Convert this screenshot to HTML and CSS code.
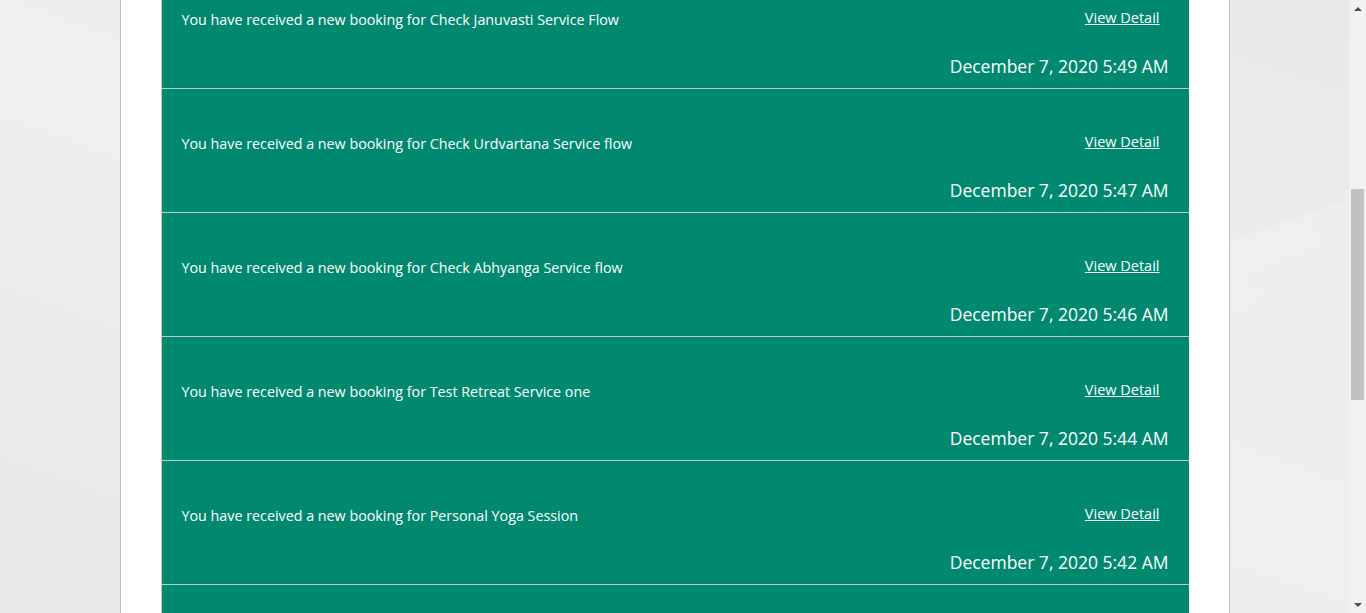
FILE: index.html
```html
<!DOCTYPE html>
<html lang="en">
<head>
<meta charset="utf-8">
<title>Notifications</title>
<link rel="stylesheet" href="styles.css">
</head>
<body>
<div class="window">
  <main class="page">
    <section class="panel">
      <ul class="notices">
        <li class="notice">
          <div class="notice-row">
            <p class="notice-text">You have received a new booking for Check Januvasti Service Flow</p>
            <a class="notice-link" href="#">View Detail</a>
          </div>
          <div class="notice-date">December 7, 2020 5:49 AM</div>
        </li>
        <li class="notice">
          <div class="notice-row">
            <p class="notice-text">You have received a new booking for Check Urdvartana Service flow</p>
            <a class="notice-link" href="#">View Detail</a>
          </div>
          <div class="notice-date">December 7, 2020 5:47 AM</div>
        </li>
        <li class="notice">
          <div class="notice-row">
            <p class="notice-text">You have received a new booking for Check Abhyanga Service flow</p>
            <a class="notice-link" href="#">View Detail</a>
          </div>
          <div class="notice-date">December 7, 2020 5:46 AM</div>
        </li>
        <li class="notice">
          <div class="notice-row">
            <p class="notice-text">You have received a new booking for Test Retreat Service one</p>
            <a class="notice-link" href="#">View Detail</a>
          </div>
          <div class="notice-date">December 7, 2020 5:44 AM</div>
        </li>
        <li class="notice">
          <div class="notice-row">
            <p class="notice-text">You have received a new booking for Personal Yoga Session</p>
            <a class="notice-link" href="#">View Detail</a>
          </div>
          <div class="notice-date">December 7, 2020 5:42 AM</div>
        </li>
        <li class="notice notice-partial"></li>
      </ul>
    </section>
  </main>
  <div class="scrollbar" aria-hidden="true">
    <div class="sb-btn"><span class="sb-arrow-up"></span></div>
    <div class="sb-track">
      <div class="sb-thumb"></div>
    </div>
    <div class="sb-btn"><span class="sb-arrow-down"></span></div>
  </div>
</div>
</body>
</html>
```

FILE: styles.css
```css
html, body {
  margin: 0;
  padding: 0;
  height: 100%;
  overflow: hidden;
}

body {
  font-family: "Open Sans", "Liberation Sans", Arial, sans-serif;
  background-color: #ebebeb;
  background-image:
    linear-gradient(160deg, rgba(255,255,255,0) 62%, rgba(255,255,255,0.18) 62.2%, rgba(255,255,255,0) 75%),
    linear-gradient(20deg, rgba(0,0,0,0.015) 0%, rgba(255,255,255,0.2) 50%, rgba(0,0,0,0.01) 100%);
}

.window {
  display: flex;
  height: 613px;
}

.page {
  flex: 1;
  display: flex;
  justify-content: center;
  align-items: flex-start;
  overflow: hidden;
}

.panel {
  box-sizing: border-box;
  width: 1110px;
  min-height: 613px;
  background: #ffffff;
  border-left: 1px solid #bdbdbd;
  border-right: 1px solid #bdbdbd;
  padding: 0 40px;
}

.notices {
  list-style: none;
  margin: -35px 0 0;
  padding: 0;
}

.notice {
  background: #00896f;
  border-left: 1px solid #c9c9c9;
  border-bottom: 1px solid #c6c6c6;
  padding: 45px 20px 10px 20px;
  color: #ffffff;
  display: flex;
  flex-direction: column;
}

.notice-partial {
  height: 68px;
  box-sizing: border-box;
}

.notice-row {
  display: flex;
  justify-content: space-between;
  align-items: flex-start;
  height: 20px;
}

.notice-text {
  margin: 0;
  font-size: 14.3px;
  line-height: 20px;
}

.notice-link {
  color: #ffffff;
  font-size: 14.5px;
  line-height: 16px;
  margin-right: 9px;
  text-decoration: underline;
}

.notice-date {
  margin-top: 24px;
  text-align: right;
  font-size: 17.5px;
  line-height: 24px;
}

.scrollbar {
  width: 17px;
  flex: none;
  background: #f1f1f1;
  display: flex;
  flex-direction: column;
}

.sb-btn {
  height: 17px;
  display: flex;
  align-items: center;
  justify-content: center;
}

.sb-arrow-up {
  width: 0;
  height: 0;
  border-left: 4px solid transparent;
  border-right: 4px solid transparent;
  border-bottom: 4px solid #505050;
}

.sb-arrow-down {
  width: 0;
  height: 0;
  border-left: 4px solid transparent;
  border-right: 4px solid transparent;
  border-top: 4px solid #505050;
}

.sb-track {
  flex: 1;
  padding: 172px 2px 0;
}

.sb-thumb {
  height: 211px;
  background: #c1c1c1;
}
```
